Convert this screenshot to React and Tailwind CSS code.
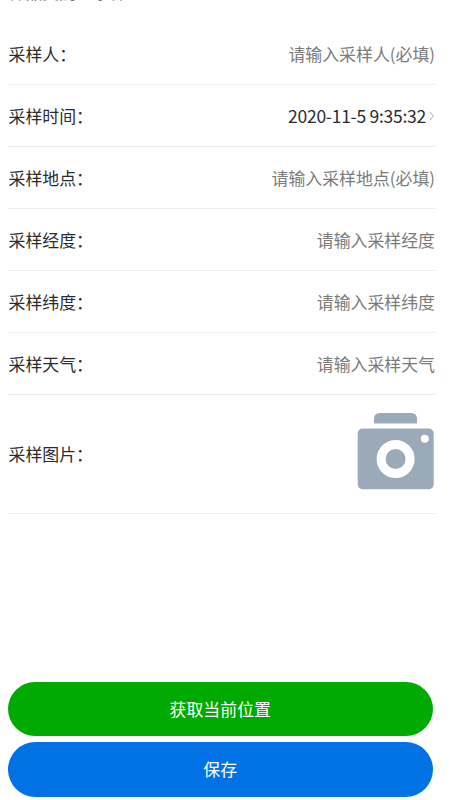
const rows = [
  { label: '采样人：', hint: '请输入采样人(必填)' },
  { label: '采样时间：', value: '2020-11-5 9:35:32' },
  { label: '采样地点：', hint: '请输入采样地点(必填)' },
  { label: '采样经度：', hint: '请输入采样经度' },
  { label: '采样纬度：', hint: '请输入采样纬度' },
  { label: '采样天气：', hint: '请输入采样天气' },
];

function Camera() {
  return (
    <svg className="mb-[6px] mr-px h-[77px] w-[77px]" viewBox="0 0 77 77">
      <path d="M17 10.5V6q0-6 6-6h31q6 0 6 6v4.5z" fill="#9baab8" />
      <rect x="0.7" y="15.5" width="76" height="60.7" rx="5" fill="#9baab8" />
      <circle cx="38.6" cy="46" r="14.5" fill="none" stroke="#fff" strokeWidth="9" />
      <circle cx="67.8" cy="25.7" r="4" fill="#fff" />
    </svg>
  );
}

export default function App() {
  return (
    <main className="flex h-[800px] w-[450px] flex-col overflow-hidden bg-white pl-2 text-[16.9px] font-normal text-[#292d30] [font-family:'Noto_Sans_CJK_SC',sans-serif]">
      <div className="flex h-[23px] w-[427px] shrink-0 items-start overflow-hidden pl-[0.5px] leading-6 text-[#777]">
        <span className="-mt-5 whitespace-pre">样品类别：水样</span>
      </div>
      {rows.map(({ label, hint, value }) => (
        <div key={label} className="flex h-[62px] w-[427px] shrink-0 items-center justify-between whitespace-nowrap border-b border-[#ececec]">
          <span className="pl-[0.5px]">{label}</span>
          {value ? (
            <span className="flex items-center">
              <span className="pt-0.5 text-[17.5px] tracking-[-0.26px]">{value}</span>
              <svg className="ml-[3px] h-2.5 w-1.5" viewBox="0 0 6 10" fill="none" stroke="#aaa" strokeWidth="1">
                <path d="M1 1l3.5 4L1 9" />
              </svg>
            </span>
          ) : (
            <span className="text-[#7b7b7b]">{hint}</span>
          )}
        </div>
      ))}
      <div className="flex h-[119px] w-[427px] shrink-0 items-center justify-between border-b border-[#ececec]">
        <span className="pl-[0.5px]">采样图片：</span>
        <Camera />
      </div>
      <div className="mt-auto flex w-[424.5px] flex-col gap-1.5 pb-[3.5px] text-white">
        <button className="h-[54px] rounded-full bg-[#00aa00]">获取当前位置</button>
        <button className="h-[54.5px] rounded-full bg-[#0072e3] pb-px">保存</button>
      </div>
    </main>
  );
}
